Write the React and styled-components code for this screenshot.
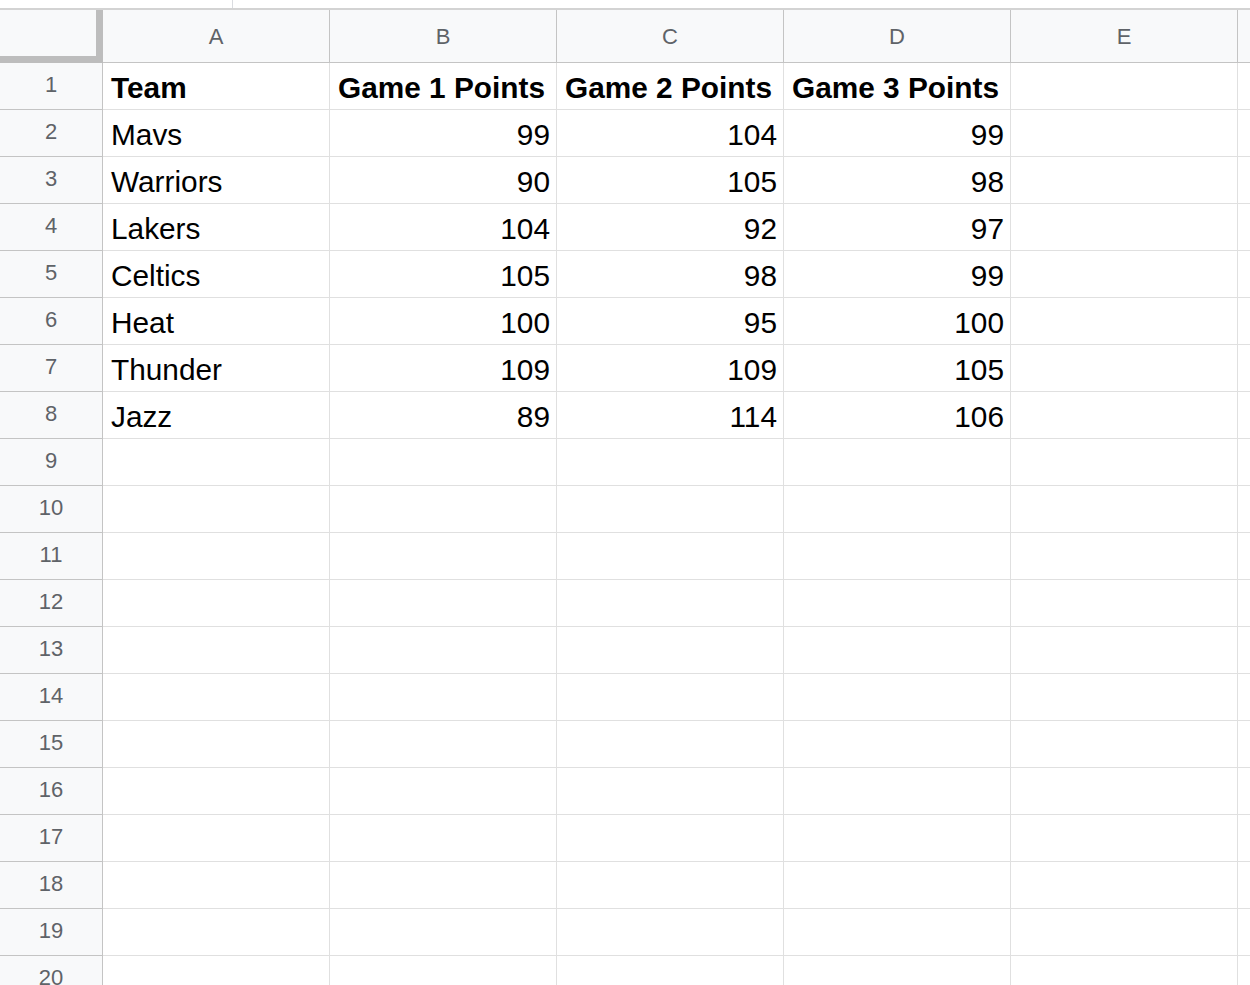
import React from "react";
import styled, { createGlobalStyle } from "styled-components";

const GlobalStyle = createGlobalStyle`
  html, body {
    margin: 0;
    padding: 0;
    background: #ffffff;
    overflow: hidden;
  }
  body {
    font-family: "Liberation Sans", Arial, sans-serif;
  }
`;

const COL_W = 227;
const ROW_H = 47;
const HEAD_H = 53;
const GUTTER_W = 103;

const Page = styled.div`
  width: 1250px;
  height: 985px;
  overflow: hidden;
  background: #fff;
`;

const ToolbarEdge = styled.div`
  height: 8px;
  display: flex;
  align-items: stretch;
  padding-left: 232px;
`;

const ToolbarDivider = styled.span`
  width: 1px;
  background: #dadce0;
`;

const Sheet = styled.div`
  display: grid;
  grid-template-columns: ${GUTTER_W}px repeat(6, ${COL_W}px);
  grid-template-rows: ${HEAD_H}px;
  grid-auto-rows: ${ROW_H}px;
  border-top: 2px solid #d3d3d3;
  width: max-content;
`;

const Corner = styled.div`
  box-sizing: border-box;
  background: #f8f9fa;
  border-right: 7px solid #bdbdbd;
  border-bottom: 7px solid #bdbdbd;
`;

const ColHeader = styled.div`
  box-sizing: border-box;
  background: #f8f9fa;
  border-right: 1px solid #c4c4c4;
  border-bottom: 1px solid #c4c4c4;
  display: flex;
  align-items: center;
  justify-content: center;
  font-family: "Liberation Sans", Arial, sans-serif;
  font-size: 22px;
  color: #5f6368;
  padding-top: 2px;
`;

const RowHeader = styled.div`
  box-sizing: border-box;
  background: #f8f9fa;
  border-right: 1px solid #c4c4c4;
  border-bottom: 1px solid #c4c4c4;
  display: flex;
  align-items: center;
  justify-content: center;
  font-family: "Liberation Sans", Arial, sans-serif;
  font-size: 22px;
  color: #5f6368;
  padding-bottom: 2px;
`;

const Cell = styled.div`
  box-sizing: border-box;
  border-right: 1px solid #e0e0e0;
  border-bottom: 1px solid #e0e0e0;
  display: flex;
  align-items: flex-end;
  justify-content: ${(p) => (p.$num ? "flex-end" : "flex-start")};
  padding: 0 6px 5px 8px;
  font-family: "Liberation Sans", Arial, sans-serif;
  font-size: 29.8px;
  line-height: 33px;
  font-weight: ${(p) => (p.$bold ? 700 : 400)};
  color: #000;
  white-space: nowrap;
  overflow: hidden;
`;

// F is only partly in view, so its letter stays off-screen
const columns = ["A", "B", "C", "D", "E", "F"];
const visibleLetters = ["A", "B", "C", "D", "E", ""];

const rows = [
  ["Team", "Game 1 Points", "Game 2 Points", "Game 3 Points"],
  ["Mavs", 99, 104, 99],
  ["Warriors", 90, 105, 98],
  ["Lakers", 104, 92, 97],
  ["Celtics", 105, 98, 99],
  ["Heat", 100, 95, 100],
  ["Thunder", 109, 109, 105],
  ["Jazz", 89, 114, 106],
];

const TOTAL_ROWS = 20;

export default function App() {
  const body = [];
  for (let r = 0; r < TOTAL_ROWS; r++) {
    const data = rows[r] || [];
    body.push(<RowHeader key={`rh${r}`}>{r + 1}</RowHeader>);
    columns.forEach((c, ci) => {
      const v = data[ci];
      const isNum = typeof v === "number";
      body.push(
        <Cell key={`${c}${r}`} $num={isNum} $bold={r === 0}>
          {v ?? ""}
        </Cell>
      );
    });
  }

  return (
    <Page>
      <GlobalStyle />
      <ToolbarEdge>
        <ToolbarDivider />
      </ToolbarEdge>
      <Sheet>
        <Corner />
        {visibleLetters.map((c, i) => (
          <ColHeader key={columns[i]}>{c}</ColHeader>
        ))}
        {body}
      </Sheet>
    </Page>
  );
}
